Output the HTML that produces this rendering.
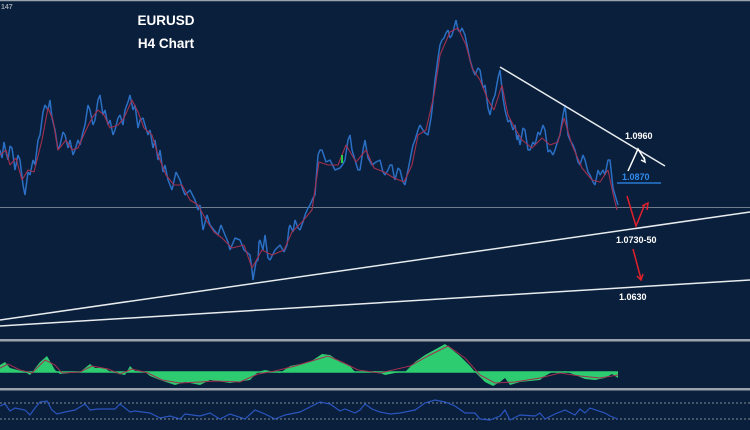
<!DOCTYPE html>
<html><head><meta charset="utf-8"><style>
html,body{margin:0;padding:0;background:#0a1f3b;}
svg{display:block}
text{font-family:"Liberation Sans",Arial,sans-serif;font-weight:bold}
</style></head><body>
<svg width="750" height="430" viewBox="0 0 750 430" xmlns="http://www.w3.org/2000/svg">
<rect width="750" height="430" fill="#0a1f3b"/>
<line x1="0" y1="0.5" x2="750" y2="0.5" stroke="#9aa3ad" stroke-width="1.5"/>
<text x="1" y="9" font-size="7" fill="#9aa3ad" font-weight="normal">147</text>
<text x="166" y="25" font-size="13.5" fill="#fff" text-anchor="middle">EURUSD</text>
<text x="166" y="48" font-size="13.5" fill="#fff" text-anchor="middle">H4 Chart</text>
<line x1="0" y1="207.5" x2="750" y2="207.5" stroke="#6f7c8c" stroke-width="1"/>
<polyline fill="none" stroke="#2a6fc4" stroke-width="1.5" stroke-linejoin="bevel" points="0,150 2,158 4,142 6,152 8,160 10,146 12,148 14,162 15,170 18,155 20,160 23,185 25,195 28,172 30,175 33,160 35,165 38,140 40,135 43,112 45,105 48,110 50,100 52,118 55,130 58,150 60,145 63,132 65,135 68,148 70,140 73,155 75,150 78,140 80,145 83,132 85,125 88,105 90,110 93,125 95,120 98,100 100,95 103,115 105,110 108,125 110,120 113,135 115,130 118,118 120,115 123,125 125,110 128,102 130,95 133,110 135,105 138,128 140,120 143,118 145,125 148,135 150,130 153,148 155,140 158,160 160,150 163,172 165,165 168,180 172,190 176,172 180,180 183,190 185,195 190,190 195,200 198,210 200,205 202,222 203,230 207,215 210,225 214,230 218,235 221,225 225,235 228,242 230,250 235,238 240,240 244,250 250,255 252,270 253,280 256,262 258,260 259,242 260,240 263,250 265,235 268,258 270,260 275,250 280,245 284,252 287,245 289,228 290,225 293,232 295,220 298,228 300,230 303,222 305,215 308,208 310,205 313,198 315,195 317,168 318,155 320,150 322,150 326,162 330,160 335,170 340,168 343,164 345,160 348,140 350,135 352,150 355,160 358,170 360,170 363,150 365,140 368,158 372,165 376,162 380,160 383,172 385,175 388,170 390,165 392,165 394,176 395,180 398,168 400,170 403,182 405,185 408,170 410,160 413,145 415,140 418,130 420,125 424,132 428,135 431,118 432,110 434,90 435,80 438,58 440,45 442,40 444,38 446,33 448,30 450,38 452,35 454,28 456,20 458,30 460,32 462,28 465,35 468,50 470,60 473,70 475,75 478,68 480,70 483,88 485,85 488,108 490,115 493,100 495,95 498,78 500,70 503,98 505,110 508,122 510,120 513,130 515,125 517,140 518,135 520,145 523,128 525,130 528,150 530,150 533,142 535,145 538,132 540,135 543,125 545,130 548,152 550,150 553,155 555,150 558,140 560,135 563,115 565,105 568,135 570,140 573,145 575,150 578,162 580,165 583,155 585,160 588,172 590,175 593,182 595,185 598,170 600,175 603,170 605,175 608,160 610,160 613,188 615,195 618,205"/>
<polyline fill="none" stroke="#a2304f" stroke-width="1.1" stroke-linejoin="bevel" points="0,155 6,150 10,165 16,158 22,180 28,170 34,172 42,140 48,108 53,120 58,150 66,140 72,150 78,148 86,130 92,118 98,110 104,115 110,128 118,125 124,118 132,100 138,112 144,128 152,135 158,155 166,175 174,185 182,185 190,200 198,205 206,220 214,232 222,238 232,248 244,245 252,268 262,250 272,255 284,250 292,232 302,222 312,210 319,162 328,165 338,165 346,145 356,162 366,150 374,168 384,172 394,178 404,182 412,165 418,135 426,130 434,95 440,55 450,32 458,28 466,45 472,68 480,80 488,100 494,110 502,85 508,115 516,130 522,140 532,148 542,138 550,145 558,142 564,118 572,145 582,168 592,180 600,182 608,170 614,198 617,210"/>
<rect x="341" y="155" width="2" height="8" fill="#2ecc40"/>
<line x1="0" y1="320" x2="750" y2="212" stroke="#e8ecef" stroke-width="1.5"/>
<line x1="0" y1="326" x2="750" y2="280" stroke="#e8ecef" stroke-width="1.5"/>
<line x1="500" y1="67" x2="665" y2="166" stroke="#e8ecef" stroke-width="1.5"/>
<polyline fill="none" stroke="#fff" stroke-width="1.5" points="628,171 638,149 645,160"/>
<polyline fill="none" stroke="#fff" stroke-width="1.5" points="641,160 645,162 644,157"/>
<text x="625" y="139" font-size="9" fill="#fff">1.0960</text>
<text x="622" y="180" font-size="9" fill="#2e8cf0">1.0870</text>
<line x1="617" y1="183" x2="661" y2="183" stroke="#2e8cf0" stroke-width="1.2"/>
<polyline fill="none" stroke="#e0202a" stroke-width="1.5" points="627,196 636,226 645,204"/>
<polyline fill="none" stroke="#e0202a" stroke-width="1.5" points="642,206 648,203 647,210"/>
<line x1="633" y1="249" x2="641" y2="279" stroke="#e0202a" stroke-width="1.5"/>
<polyline fill="none" stroke="#e0202a" stroke-width="1.5" points="637,276 641,280 643,274"/>
<text x="616" y="243" font-size="9" fill="#fff">1.0730-50</text>
<text x="619" y="300" font-size="9" fill="#fff">1.0630</text>
<rect x="0" y="339" width="750" height="2.5" fill="#9aa3ad"/>
<rect x="0" y="388" width="750" height="2.5" fill="#9aa3ad"/>
<polygon fill="#2ecc71" points="0,372 0,365 5,362 10,368 25,372 30,375 40,362 47,356 55,370 60,374 80,372 90,364 95,368 105,368 110,372 125,375 130,366 135,371 145,372 150,376 160,380 175,385 185,382 200,385 210,380 230,383 250,380 258,372 265,370 280,373 290,366 310,362 322,354 330,355 340,362 350,366 355,372 365,372 375,371 385,375 395,373 405,372 415,362 425,355 445,344 460,356 470,366 475,372 485,382 493,386 500,382 505,378 510,385 520,382 540,380 545,376 552,372 560,373 565,371 575,375 585,379 595,380 605,378 612,374 618,378 618,372"/>
<line x1="0" y1="372" x2="618" y2="372" stroke="#2ecc71" stroke-width="1.5"/>
<polyline fill="none" stroke="#a2304f" stroke-width="1" points="0,368 8,364 20,370 32,373 45,360 55,365 62,373 80,372 92,366 108,369 120,374 132,369 148,373 162,380 180,383 200,382 215,381 240,382 258,374 275,371 295,366 315,360 328,356 342,362 358,370 380,373 410,366 428,356 448,346 465,358 480,375 495,383 515,382 540,378 560,373 580,376 600,378 618,375"/>
<line x1="0" y1="403" x2="750" y2="403" stroke="#7f8b99" stroke-width="1" stroke-dasharray="2,2"/>
<line x1="0" y1="419" x2="750" y2="419" stroke="#7f8b99" stroke-width="1" stroke-dasharray="2,2"/>
<polyline fill="none" stroke="#2a55c0" stroke-width="1.2" points="0,406 5,404 10,411 15,408 25,410 30,415 35,408 40,402 47,401 52,410 57,414 65,412 75,410 85,404 90,410 98,409 105,409 115,409 120,404 130,412 135,411 150,413 160,418 170,416 180,419 185,414 200,416 210,413 220,419 230,414 245,419 255,410 265,414 275,419 285,415 295,413 300,412 310,407 320,402 330,404 340,411 345,409 355,413 360,410 365,404 372,409 380,412 390,414 400,413 415,410 425,403 435,400 445,402 455,406 465,413 475,413 480,419 490,420 500,416 505,410 510,420 520,415 535,416 540,413 545,419 555,414 565,410 575,415 580,409 585,413 590,408 605,413 610,416 618,419"/>
</svg>
</body></html>
